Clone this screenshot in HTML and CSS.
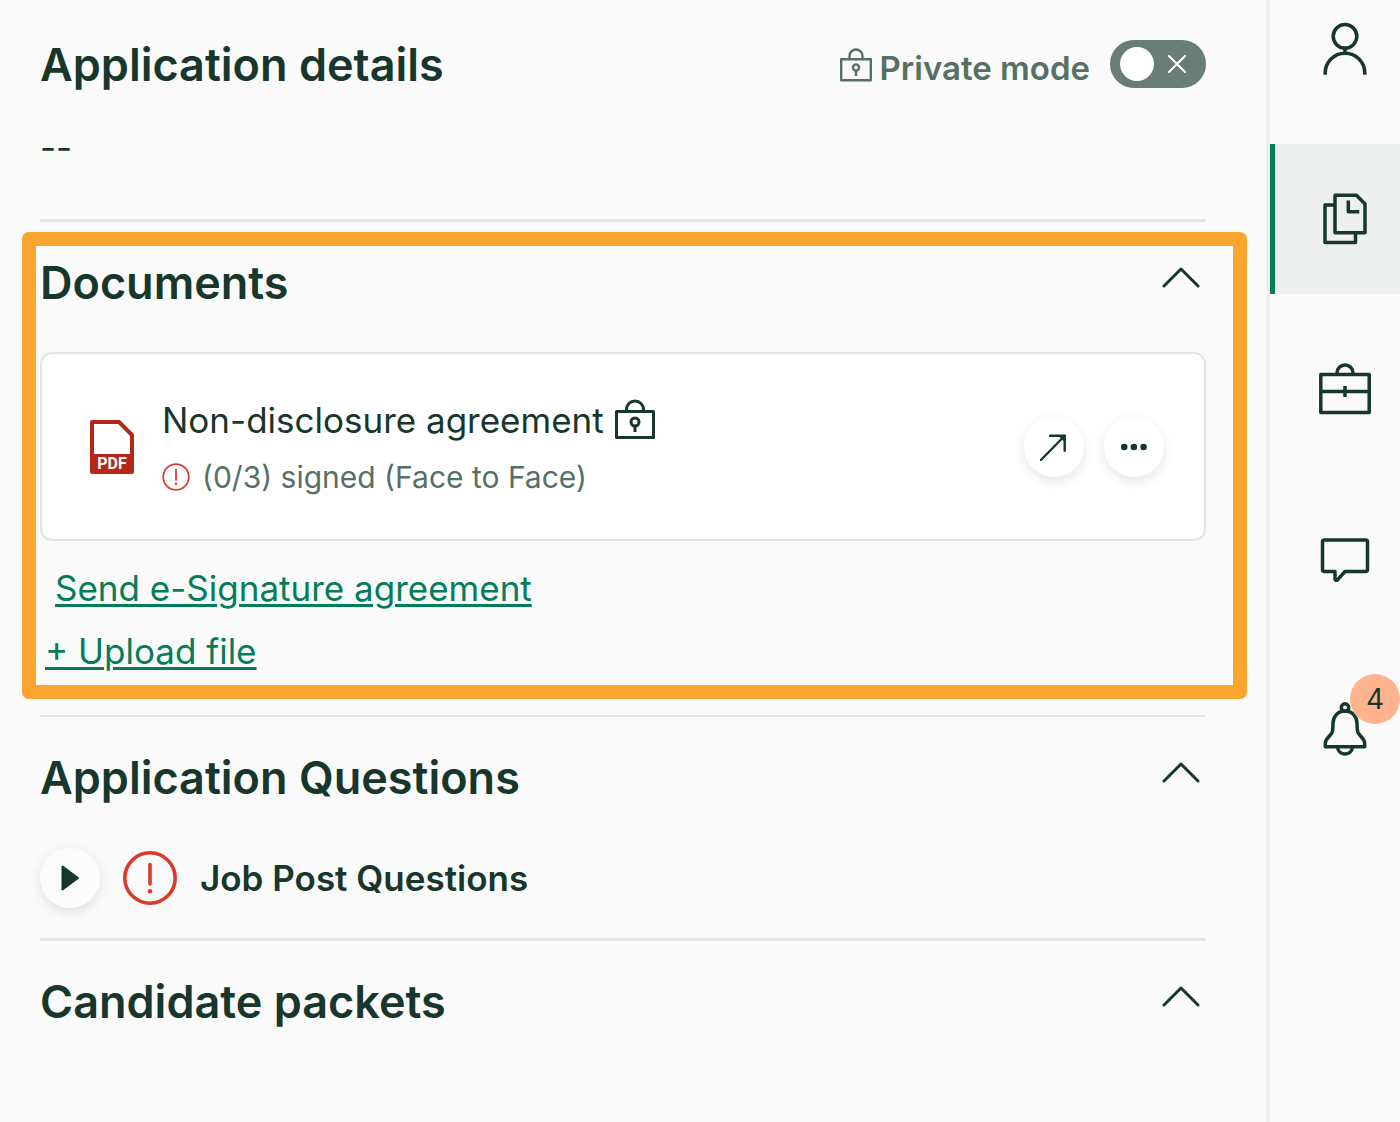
FILE: index.html
```html
<!DOCTYPE html>
<html lang="en">
<head>
<meta charset="utf-8">
<meta name="viewport" content="width=device-width, initial-scale=1">
<title>Application details</title>
<link rel="stylesheet" href="styles.css">
</head>
<body>
<div class="layout">
  <main class="main">
    <section class="details">
      <div class="section-head">
        <h2>Application details</h2>
        <div class="private">
          <svg class="private-lock" width="32" height="34" viewBox="0 0 32 34" fill="none" stroke="currentColor" stroke-width="2.4" stroke-linejoin="round" aria-hidden="true">
            <rect x="1.2" y="11.2" width="29.6" height="21"/>
            <path d="M9.5 11V8a6.500 6.500 0 0 1 13 0v3"/>
            <circle cx="16" cy="19.500" r="3.100"/>
            <path d="M16 22.500V28"/>
          </svg>
          <label for="private-mode">Private mode</label>
          <span class="toggle">
            <input type="checkbox" role="switch" id="private-mode">
            <svg class="toggle-x" width="18" height="18" viewBox="0 0 18 18" fill="none" stroke="currentColor" stroke-width="2" stroke-linecap="round" aria-hidden="true"><path d="M1 1l16 16M17 1L1 17"/></svg>
          </span>
        </div>
      </div>
      <p class="empty">--</p>
    </section>

    <section class="documents">
      <div class="section-head">
        <h2>Documents</h2>
        <button class="collapse" type="button" aria-label="Collapse Documents"><svg width="38" height="22" viewBox="0 0 38 22" aria-hidden="true"><path d="M2 20L19 3l17 17"/></svg></button>
      </div>
      <article class="card">
        <svg class="pdf" width="44" height="54" viewBox="0 0 44 54" aria-hidden="true">
          <path d="M2 2h27l13 13v37H2z" fill="#fff" stroke="#b52718" stroke-width="4" stroke-linejoin="round"/>
          <path d="M2 34h40v18H2z" fill="#b52718"/>
          <text x="22" y="49" text-anchor="middle">PDF</text>
        </svg>
        <div class="card-text">
          <div class="card-title">
            <span>Non-disclosure agreement</span>
            <svg width="42" height="42" viewBox="0 1 42 42" fill="none" stroke="currentColor" stroke-width="3" stroke-linejoin="round" aria-hidden="true">
              <rect x="2.500" y="13.500" width="37" height="26"/>
              <path d="M12.500 13V11.500a8.500 8.500 0 0 1 17 0V13"/>
              <circle cx="21" cy="24" r="4"/>
              <path d="M21 28v6"/>
            </svg>
          </div>
          <div class="card-status">
            <svg width="28" height="28" viewBox="0 0 28 28" fill="none" stroke="#d93a2b" stroke-width="1.700" stroke-linecap="round" aria-hidden="true">
              <circle cx="14" cy="14" r="12.800"/><path d="M14 6.500v10.500"/><circle cx="14" cy="20.700" r="1.200" fill="#d93a2b" stroke="none"/>
            </svg>
            <span>(0/3) signed (Face to Face)</span>
          </div>
        </div>
        <div class="card-actions">
          <button class="round" type="button" aria-label="Open document">
            <svg width="28" height="28" viewBox="0 0 28 28" fill="none" stroke="currentColor" stroke-width="2.400" stroke-linecap="round" aria-hidden="true"><path d="M.9 27L24.500 3"/><path d="M10 2.800h14.700v15"/><path d="M20 3.500h4V7.500z" fill="currentColor" stroke-width="1"/></svg>
          </button>
          <button class="round" type="button" aria-label="More actions">
            <svg width="28" height="8" viewBox="0 0 28 8" fill="currentColor" aria-hidden="true"><circle cx="4.200" cy="4" r="3.300"/><circle cx="13.900" cy="4" r="3.300"/><circle cx="23.600" cy="4" r="3.300"/></svg>
          </button>
        </div>
      </article>
      <div class="links">
        <a class="send" href="#send">Send e-Signature agreement</a>
        <a class="upload" href="#upload">+ Upload file</a>
      </div>
    </section>

    <section class="questions">
      <div class="section-head">
        <h2>Application Questions</h2>
        <button class="collapse" type="button" aria-label="Collapse Application Questions"><svg width="38" height="22" viewBox="0 0 38 22" aria-hidden="true"><path d="M2 20L19 3l17 17"/></svg></button>
      </div>
      <div class="question-row">
        <button class="round" type="button" aria-label="Expand Job Post Questions">
          <svg width="18" height="26" viewBox="0 0 18 26" fill="currentColor" stroke="currentColor" stroke-width="2" stroke-linejoin="round" aria-hidden="true"><path d="M1.500 1.500L17 13 1.500 24.500z"/></svg>
        </button>
        <svg class="alert" width="54" height="54" viewBox="0 0 54 54" fill="none" stroke="#d93a2b" stroke-width="3.600" stroke-linecap="round" aria-hidden="true">
          <circle cx="27" cy="27" r="25.200"/><path d="M27 13.500v19.500"/><circle cx="27" cy="40.300" r="2.300" fill="#d93a2b" stroke="none"/>
        </svg>
        <h3>Job Post Questions</h3>
      </div>
    </section>

    <section class="packets">
      <div class="section-head">
        <h2>Candidate packets</h2>
        <button class="collapse" type="button" aria-label="Collapse Candidate packets"><svg width="38" height="22" viewBox="0 0 38 22" aria-hidden="true"><path d="M2 20L19 3l17 17"/></svg></button>
      </div>
    </section>
  </main>

  <aside class="rail">
    <nav class="rail-nav" aria-label="Candidate">
      <a class="rail-item" href="#profile" aria-label="Profile">
        <svg width="54" height="54" viewBox="0 0 54 54"><circle cx="27" cy="14.300" r="11.800"/><path d="M27 26v5M7.200 52.700V51a19.800 19.800 0 0 1 39.600 0v1.700"/></svg>
      </a>
      <a class="rail-item current" href="#documents" aria-label="Documents" aria-current="page">
        <svg width="54" height="54" viewBox="0 0 54 54"><path d="M17 3.300h21.500L47 12v28.700H17z"/><path d="M17 13H7v37.500h30.500V41"/><path d="M30.300 8.500v11.200h11"/></svg>
      </a>
      <a class="rail-item" href="#jobs" aria-label="Jobs">
        <svg width="54" height="54" viewBox="0 0 54 54"><path d="M2.800 12.500h48.400v38H2.800zM2.800 29.500h48.400M27 24v11M19 12v-1a8 8 0 0 1 16 0v1"/></svg>
      </a>
      <a class="rail-item" href="#messages" aria-label="Messages">
        <svg width="54" height="54" viewBox="0 0 54 54"><path d="M6.500 8h41a2 2 0 0 1 2 2v27.500a2 2 0 0 1-2 2H27l-7.500 8.300q-2 1.500-2.500-1V39.500H6.500a2 2 0 0 1-2-2V10a2 2 0 0 1 2-2z"/></svg>
      </a>
      <a class="rail-item" href="#notifications" aria-label="Notifications, 4 new">
        <svg width="54" height="54" viewBox="0 0 54 54"><circle cx="27" cy="5.500" r="3.700"/><path d="M27 9c-7 0-12 5.500-12 12.500 0 5 0 8-1.500 10-2 3-5.700 5-6.200 9.500V44.800h39.400V41c-.5-4.500-4.200-6.500-6.200-9.500-1.500-2-1.500-5-1.500-10C39 14.500 34 9 27 9z"/><path d="M19.500 45.500c1.500 8.800 13.500 8.800 15 0"/></svg>
        <span class="badge">4</span>
      </a>
    </nav>
  </aside>
</div>
</body>
</html>
```

FILE: styles.css
```css
:root {
  --ink: #17372c;
  --slate: #557065;
  --green: #047d58;
  --line: #e1e5e4;
  --page: #fafafa;
}

* { box-sizing: border-box; }

body {
  margin: 0;
  background: var(--page);
  color: var(--ink);
  font-family: Inter, "Liberation Sans", sans-serif;
  font-size: 35px;
  line-height: 48px;
}

h2, h3, p { margin: 0; }
svg { display: block; flex: none; }

button {
  border: 0;
  padding: 0;
  background: none;
  color: inherit;
  font: inherit;
  cursor: pointer;
}

.layout { display: flex; min-height: 100vh; }
.main { flex: 1; min-width: 0; padding: 0 60px 0 40px; }

.section-head {
  display: flex;
  align-items: flex-start;
  justify-content: space-between;
}

h2 { font-size: 45px; line-height: 50px; font-weight: 600; }

/* Application details */
.details { padding: 40px 0 48px; border-bottom: 3px solid var(--line); }
.private { display: flex; align-items: flex-start; color: var(--slate); }
.private-lock { margin-top: 8px; }
.private label { padding: 4px 20px 0 8px; font-size: 33px; font-weight: 600; }
.toggle { position: relative; display: flex; }

.toggle input {
  appearance: none;
  display: flex;
  align-items: center;
  width: 96px;
  height: 48px;
  margin: 0;
  padding-left: 10px;
  border-radius: 24px;
  background: #677d75;
  cursor: pointer;
}

.toggle input::before {
  content: "";
  width: 34px;
  height: 34px;
  border-radius: 50%;
  background: #fff;
}

.toggle-x {
  position: absolute;
  top: 15px;
  left: 58px;
  color: #fff;
  pointer-events: none;
}

.empty { padding-top: 31px; }

/* Documents */
.documents {
  margin: 10px -41px 16px -18px;
  padding: 12px 27px 10px 4px;
  border: 14px solid #f9a530;
  border-radius: 7px;
}

.collapse { padding: 8px 6px; }
.collapse path {
  fill: none;
  stroke: currentColor;
  stroke-width: 3;
  stroke-linecap: round;
  stroke-linejoin: round;
}

.card {
  display: flex;
  align-items: center;
  margin-top: 44px;
  padding: 36px 40px 36px 48px;
  border: 2px solid var(--line);
  border-radius: 12px;
  background: #fff;
}

.pdf text { fill: #fff; font: 700 16px Roboto, sans-serif; }
.card-text { flex: 1; min-width: 0; margin-left: 28px; }
.card-title, .card-status { display: flex; align-items: center; }
.card-title { gap: 10px; height: 60px; }
.card-status { gap: 12px; height: 53px; color: var(--slate); font-size: 30px; }
.card-actions { display: flex; gap: 20px; }

.round {
  display: flex;
  align-items: center;
  justify-content: center;
  flex: none;
  width: 60px;
  height: 60px;
  border-radius: 50%;
  box-shadow: 0 4px 12px rgba(21, 55, 44, 0.12);
}

.card .round { background: #fff; }
.question-row .round { background: #fcfcfc; }

.links {
  display: flex;
  flex-direction: column;
  align-items: flex-start;
  gap: 15px;
  margin-top: 23px;
}

.links a {
  color: var(--green);
  text-decoration-thickness: 3px;
  text-underline-offset: 3px;
}

.send { margin-left: 15px; }
.upload { margin-left: 5px; }

/* Questions and packets */
.questions { padding: 36px 0 30px; border-top: 2px solid var(--line); }
.question-row { display: flex; align-items: center; margin-top: 45px; }
.alert { margin: 0 23px; }
h3 { font-size: 35px; font-weight: 600; }
.packets { padding: 36px 0; border-top: 3px solid var(--line); }

/* Right rail */
.rail {
  flex: none;
  width: 134px;
  border-left: 4px solid #eef0ef;
  overflow: hidden;
}

.rail-nav {
  display: flex;
  flex-direction: column;
  gap: 20px;
  margin-top: -26px;
}

.rail-item {
  position: relative;
  display: flex;
  align-items: center;
  justify-content: center;
  height: 150px;
  padding-left: 15px;
  border-left: 5px solid transparent;
  color: var(--ink);
  text-decoration: none;
}

.rail-item svg {
  fill: none;
  stroke: currentColor;
  stroke-width: 3.5;
  stroke-linejoin: round;
}

.rail-item.current { border-color: var(--green); background: #eef0ef; }

.badge {
  position: absolute;
  top: 20px;
  right: 0;
  width: 50px;
  height: 50px;
  border-radius: 50%;
  background: #ffb38e;
  font-size: 28px;
  line-height: 50px;
  text-align: center;
}
```
